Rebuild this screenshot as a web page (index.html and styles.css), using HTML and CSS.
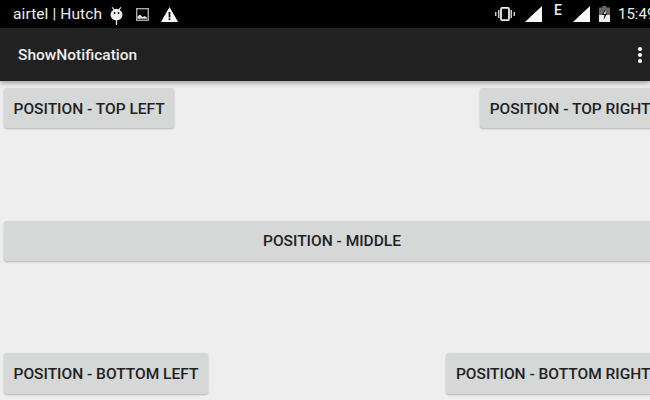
FILE: index.html
```html
<!DOCTYPE html>
<html lang="en">
<head>
<meta charset="utf-8">
<title>ShowNotification</title>
<link rel="stylesheet" href="styles.css">
</head>
<body>
<div class="screen">
  <header class="status">
    <div class="status-left">
      <span class="carrier">airtel | Hutch</span>
      <svg class="ic-android" viewBox="0 0 13 18" width="13" height="18"><path fill="#eee" d="M2.500 0l2 2.300a5 5 0 0 1 4 0L10.500 0l.8.600-1.700 2.400A5.600 5.600 0 0 1 12.500 7.500a6 6 0 0 1-12 0A5.600 5.600 0 0 1 3.400 3L1.700.600zM5.900 13h1.200v5H5.900z"/><circle cx="4.500" cy="6" r=".9" fill="#000"/><circle cx="8.500" cy="6" r=".9" fill="#000"/></svg>
      <svg class="ic-image" viewBox="0 0 13 13" width="13" height="13"><rect x=".7" y=".7" width="11.600" height="11.600" fill="none" stroke="#aaa" stroke-width="1.400"/><path fill="#ddd" d="M1.500 10.800V8.500l2.500-2 2.500 2.500 2-1 2.500 1.500v1.300z"/></svg>
      <svg class="ic-warn" viewBox="0 0 17 15" width="17" height="15"><path fill="#fff" d="M8.500 0L17 15H0z"/><rect x="7.600" y="5" width="1.800" height="5.500" fill="#000"/><rect x="7.600" y="11.300" width="1.800" height="1.800" fill="#000"/></svg>
    </div>
    <div class="status-right">
      <svg class="ic-vibrate" viewBox="0 0 20 14" width="20" height="14"><rect x="6" y=".9" width="8" height="12.200" rx="1.200" fill="none" stroke="#eee" stroke-width="1.800"/><path fill="#ccc" d="M3 3h1.500v8H3zM15.500 3H17v8h-1.500zM0 5h1.500v4H0zM18.500 5H20v4h-1.500z"/></svg>
      <svg class="ic-signal" viewBox="0 0 17 16" width="17" height="16"><path fill="#fff" d="M17 0v16H0z"/></svg>
      <span class="net">E</span>
      <svg class="ic-signal" viewBox="0 0 17 16" width="17" height="16"><path fill="#fff" d="M17 0v16H0z"/></svg>
      <svg class="ic-battery" viewBox="0 0 11 16" width="11" height="16"><path fill="#666" d="M3.500 0h4v1.500H11V9H0V1.500h3.500z"/><path fill="#eee" d="M0 9h11v7H0z"/><path fill="#000" d="M6.500 3L3 9h2.500l-1 5L8 7.500H5.500z"/><path fill="#eee" d="M6.500 4.500L4.500 8h2.200z"/></svg>
      <span class="clock">15:49</span>
    </div>
  </header>
  <div class="appbar">
    <span class="app-title">ShowNotification</span>
    <svg class="ic-more" viewBox="0 0 6 18" width="6" height="18"><circle cx="3" cy="3" r="2.100" fill="#fff"/><circle cx="3" cy="9" r="2.100" fill="#fff"/><circle cx="3" cy="15" r="2.100" fill="#fff"/></svg>
  </div>
  <main class="content">
    <div class="row">
      <button class="btn">POSITION - TOP LEFT</button>
      <button class="btn">POSITION - TOP RIGHT</button>
    </div>
    <div class="row">
      <button class="btn btn-wide">POSITION - MIDDLE</button>
    </div>
    <div class="row">
      <button class="btn btn-tall">POSITION - BOTTOM LEFT</button>
      <button class="btn btn-tall">POSITION - BOTTOM RIGHT</button>
    </div>
  </main>
</div>
</body>
</html>
```
FILE: styles.css
```css
html, body {
  margin: 0;
  padding: 0;
  width: 650px;
  height: 400px;
  overflow: hidden;
  background: #eeeeee;
}
.screen {
  width: 650px;
  height: 400px;
  display: flex;
  flex-direction: column;
  overflow: hidden;
  font-family: Roboto, "Liberation Sans", sans-serif;
}
.status {
  flex: 0 0 28px;
  background: #000;
  display: flex;
  align-items: center;
  justify-content: space-between;
  color: #eeeeee;
  padding-left: 13px;
  white-space: nowrap;
}
.status-left, .status-right {
  display: flex;
  align-items: center;
}
.status svg {
  flex: none;
}
.carrier {
  font-size: 15.500px;
  font-weight: 400;
  letter-spacing: 0.100px;
}
.ic-android { margin: 3px 0 0 8px; }
.ic-image { margin-left: 13px; }
.ic-warn { margin-left: 12px; }
.status-right {
  width: 155px;
  flex: none;
}
.ic-vibrate { margin-right: 10px; }
.net {
  flex: none;
  font-size: 14px;
  font-weight: 500;
  width: 9px;
  margin: 0 10px 9px 12px;
}
.ic-battery { margin-left: 9px; }
.clock {
  flex: none;
  font-size: 15px;
  margin-left: 8px;
}
.appbar {
  flex: 0 0 53px;
  background: #212121;
  display: flex;
  align-items: center;
  justify-content: space-between;
  padding: 0 7px 0 18px;
  box-shadow: 0 2px 5px rgba(0, 0, 0, 0.350);
  position: relative;
  color: #eeeeee;
}
.app-title {
  font-size: 15.500px;
  font-weight: 500;
}
.content {
  flex: 1;
  display: flex;
  flex-direction: column;
  justify-content: space-between;
  padding: 7px 0 6px 4px;
  min-height: 0;
}
.row {
  display: flex;
  justify-content: space-between;
  width: 656px;
}
.btn {
  height: 40px;
  border: 0;
  margin: 0;
  padding: 1px 9.500px 0;
  border-radius: 3px;
  background: #d6d7d7;
  color: #212121;
  font-family: inherit;
  font-size: 15.500px;
  font-weight: 500;
  white-space: nowrap;
  box-shadow: 0 1px 2px rgba(0, 0, 0, 0.250);
}
.btn-tall {
  height: 41px;
}
.btn-wide {
  flex: 1;
}
```
